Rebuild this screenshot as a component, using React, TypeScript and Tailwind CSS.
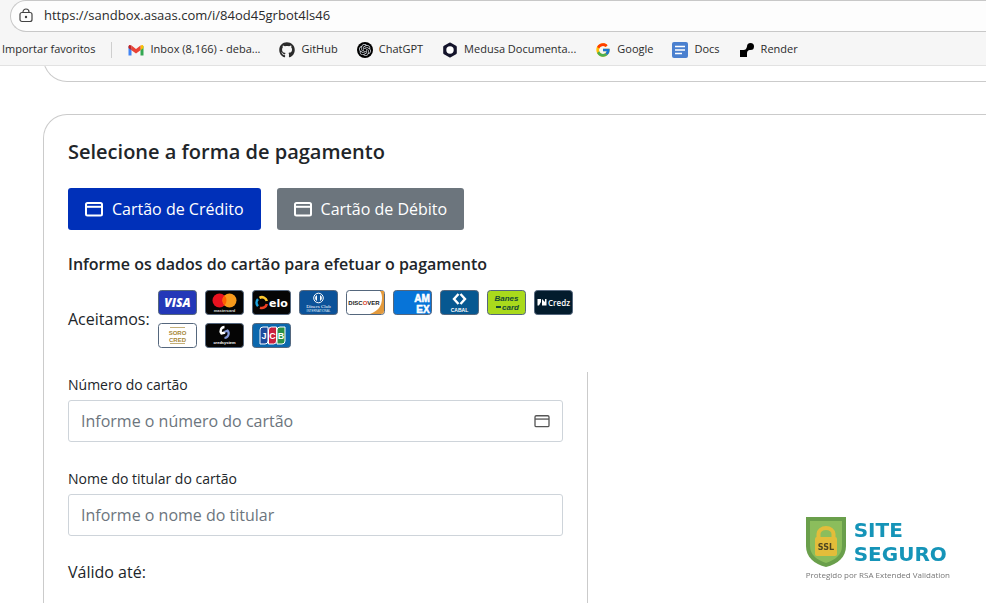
import type { ReactNode } from "react";
import { FaGithub } from "react-icons/fa";
import { FcGoogle } from "react-icons/fc";
import { SiOpenai } from "react-icons/si";

interface BookmarkProps {
  label: string;
  icon: ReactNode;
}

const GmailIcon = () => (
  <svg viewBox="0 0 16 12" className="h-3 w-4" aria-hidden="true">
    <path d="M.5 2v9.500h3V4.500z" fill="#4285f4" />
    <path d="M15.500 2v9.500h-3V4.500z" fill="#34a853" />
    <path d="M12.500 1.600c1.500-1.200 3-.6 3 1V4l-3 2.300z" fill="#fbbc04" />
    <path d="M3.500 1.600 8 5l4.500-3.400v4.700L8 9.500 3.500 6.300z" fill="#ea4335" />
    <path d="M.5 2.600c0-1.600 1.500-2.200 3-1v4.700L.5 4z" fill="#c5221f" />
  </svg>
);

const ChatGptIcon = () => (
  <span className="flex size-4 items-center justify-center rounded-full bg-black">
    <SiOpenai className="size-3 text-gray-300" />
  </span>
);

const MedusaIcon = () => (
  <svg viewBox="0 0 16 16" className="size-4" aria-hidden="true">
    <path d="M8 2 13.300 5v6L8 14l-5.300-3V5z" fill="#14142b" stroke="#14142b" strokeWidth="3" strokeLinejoin="round" />
    <circle cx="8" cy="8" r="3.700" fill="#fff" />
  </svg>
);

const DocsIcon = () => (
  <svg viewBox="0 0 16 16" className="size-4" aria-hidden="true">
    <rect width="16" height="16" rx="2" fill="#4a80cf" />
    <path d="M3 4.500h10M3 8h10M3 11.500h7" stroke="#fff" strokeWidth="1.500" />
  </svg>
);

const RenderIcon = () => (
  <svg viewBox="0 0 16 16" className="size-4" aria-hidden="true">
    <circle cx="11.500" cy="4.500" r="3.500" fill="#000" />
    <path d="M1 8h3.500c2 0 3-1 3.500-3.500l4 3.500c-2 0-4 .5-4 3V15H1z" fill="#000" />
  </svg>
);

const LockIcon = () => (
  <svg viewBox="0 0 16 16" className="size-4" fill="none" stroke="#444" strokeWidth="1.200" aria-hidden="true">
    <rect x="2" y="4.500" width="12" height="9" rx="2" />
    <path d="M5 4.500V4a3 3 0 0 1 6 0v.5" />
    <circle cx="8" cy="9" r=".6" fill="#444" />
  </svg>
);

const CreditCardIcon = ({ className }: { className: string }) => (
  <svg viewBox="0 0 18 16" className={className} fill="none" stroke="currentColor" aria-hidden="true">
    <rect x="1" y="2" width="16" height="12.500" rx="1.500" />
    <path d="M1 5.800h16" />
  </svg>
);

const Bookmark = ({ label, icon }: BookmarkProps) => (
  <a href="#" className="flex items-center gap-1.5 whitespace-nowrap">
    {icon}
    {label}
  </a>
);

interface CardBrandProps {
  name: string;
  fill: string;
  stroke?: string;
  children: ReactNode;
}

const CardBrand = ({ name, fill, stroke = "#55677d", children }: CardBrandProps) => (
  <svg
    viewBox="0 0 39 25"
    className="h-[25px] w-[39px] font-['Liberation_Sans',sans-serif]"
    role="img"
    aria-label={name}
  >
    <rect x=".5" y=".5" width="38" height="24" rx="3" fill={fill} stroke={stroke} />
    {children}
  </svg>
);

const CardBrands = () => (
  <div className="flex max-w-[420px] flex-wrap gap-2">
    <CardBrand name="Visa" fill="#2338b8">
      <text x="19.500" y="17" textAnchor="middle" fontSize="12" fontWeight="800" fontStyle="italic" className="font-['Open_Sans']" fill="#fff">VISA</text>
    </CardBrand>
    <CardBrand name="Mastercard" fill="#050505">
      <circle cx="14.500" cy="10.500" r="7" fill="#e8121f" />
      <circle cx="24.500" cy="10.500" r="7" fill="#f79a1c" />
      <path d="M19.500 5.600a7 7 0 0 1 0 9.800 7 7 0 0 1 0-9.800z" fill="#ff5f00" />
      <text x="19.500" y="22" textAnchor="middle" fontSize="4" fontWeight="700" fill="#ddd">mastercard</text>
    </CardBrand>
    <CardBrand name="Elo" fill="#050505">
      <g fill="none" strokeWidth="2.600">
        <path d="M7.500 7.800a5 5 0 0 1 7.300 3.200" stroke="#fdc82f" />
        <path d="M6 16.200a5 5 0 0 1 0-7" stroke="#1ba5e0" />
        <path d="M14.800 14a5 5 0 0 1-6.800 3.600" stroke="#ee4023" />
      </g>
      <text x="26.500" y="16.500" textAnchor="middle" fontSize="11" fontWeight="700" className="font-['DejaVu_Sans']" fill="#fff">elo</text>
    </CardBrand>
    <CardBrand name="Diners Club" fill="#0b5299">
      <circle cx="19.500" cy="8" r="4.800" fill="none" stroke="#fff" />
      <path d="M18 5a3.300 3.300 0 0 0 0 6zM21 5a3.300 3.300 0 0 1 0 6z" fill="#fff" />
      <text x="19.500" y="18" textAnchor="middle" fontSize="5" className="font-['Liberation_Serif']" fill="#fff">Diners Club</text>
      <text x="19.500" y="22" textAnchor="middle" fontSize="3" fill="#dceaf7">INTERNATIONAL</text>
    </CardBrand>
    <CardBrand name="Discover" fill="#fff">
      <path d="M38 1v20a3 3 0 0 1-3 3H24c8-3 12-8 12-16 0-3-.5-5-2-7z" fill="#e39a3c" />
      <text x="18" y="15" textAnchor="middle" fontSize="6" fontWeight="800" fill="#222">
        DISC<tspan fill="#d9432c">O</tspan>VER
      </text>
    </CardBrand>
    <CardBrand name="American Express" fill="#0774d8">
      <text x="29" y="11.500" textAnchor="middle" fontSize="10" fontWeight="800" fill="#fff" stroke="#fff" strokeWidth=".5">AM</text>
      <text x="30" y="22.500" textAnchor="middle" fontSize="10" fontWeight="800" fill="#fff" stroke="#fff" strokeWidth=".5">EX</text>
    </CardBrand>
    <CardBrand name="Cabal" fill="#075891">
      <path d="M18.500 4 14 9l4.500 5M20.500 4 25 9l-4.500 5" fill="none" stroke="#fff" strokeWidth="2.400" />
      <text x="19.500" y="22" textAnchor="middle" fontSize="5" fontWeight="700" fill="#fff">CABAL</text>
    </CardBrand>
    <CardBrand name="Banescard" fill="#a9da1c">
      <text x="19.500" y="11" textAnchor="middle" fontSize="8" fontWeight="800" fontStyle="italic" fill="#164b35">Banes</text>
      <path d="M9 16h5v2H9z" fill="#164b35" />
      <text x="23.500" y="20" textAnchor="middle" fontSize="8" fontWeight="800" fontStyle="italic" fill="#164b35">card</text>
    </CardBrand>
    <CardBrand name="Credz" fill="#031c2d">
      <path d="M3.500 9h3.500v3L5 15.500H3.500zM8 9l3 3V9h1.500v6.500H8z" fill="#fff" />
      <text x="25" y="15.500" textAnchor="middle" fontSize="8" fontWeight="600" className="font-['Open_Sans']" fill="#fff">Credz</text>
    </CardBrand>
    <CardBrand name="Sorocred" fill="#fff">
      <path d="M12 4.500h15M12 20.500h15" stroke="#b59a55" strokeWidth=".8" />
      <text x="19.500" y="11.500" textAnchor="middle" fontSize="6" fontWeight="700" fill="#a58535">SORO</text>
      <text x="19.500" y="18.500" textAnchor="middle" fontSize="6" fontWeight="700" fill="#a58535">CRED</text>
    </CardBrand>
    <CardBrand name="Credsystem" fill="#050505">
      <path d="M19.500 4a4 4 0 0 0-3 6.500l3.500-1" fill="none" stroke="#fff" strokeWidth="2.400" />
      <path d="M19.500 15a4.500 4.500 0 0 0 3-7.500l-3 1.500" fill="none" stroke="#8398d8" strokeWidth="2.200" />
      <text x="19.500" y="21" textAnchor="middle" fontSize="4" fontWeight="700" fill="#fff">credsystem</text>
    </CardBrand>
    <CardBrand name="JCB" fill="#0b67ad">
      <path d="M11 4h5v14a3 3 0 0 1-3 3H8V7a3 3 0 0 1 3-3z" fill="#1c4a9d" stroke="#fff" />
      <path d="M19.500 4h5v14a3 3 0 0 1-3 3h-5V7a3 3 0 0 1 3-3z" fill="#c9213f" stroke="#fff" />
      <path d="M28 4h5v14a3 3 0 0 1-3 3h-5V7a3 3 0 0 1 3-3z" fill="#2b9146" stroke="#fff" />
      <text x="12" y="15.500" textAnchor="middle" fontSize="9" fontWeight="800" fill="#fff">J</text>
      <text x="20.500" y="15.500" textAnchor="middle" fontSize="9" fontWeight="800" fill="#fff">C</text>
      <text x="29" y="15.500" textAnchor="middle" fontSize="9" fontWeight="800" fill="#fff">B</text>
    </CardBrand>
  </div>
);

const BrowserBar = () => (
  <header className="shrink-0 border-b border-[#e2e2e2] bg-[#f6f6f6] text-[#2b2b2b]">
    <div className="ml-2.5 flex h-8 items-center gap-2.5 rounded-l-full border border-r-0 border-[#c8c8c8] bg-[#fdfdfd] pl-[7px]">
      <LockIcon />
      <input
        type="text"
        aria-label="Endereço"
        defaultValue="https://sandbox.asaas.com/i/84od45grbot4ls46"
        className="min-w-0 flex-1 bg-transparent text-[13px] outline-none"
      />
    </div>
    <nav className="flex h-[33px] items-center gap-4 pl-0.5 pt-0.5 text-[11px]">
      <a href="#" className="whitespace-nowrap">Importar favoritos</a>
      <span className="h-4 w-px bg-[#cfcfcf]" />
      <div className="flex items-center gap-[19px]">
        <Bookmark label="Inbox (8,166) - deba..." icon={<GmailIcon />} />
        <Bookmark label="GitHub" icon={<FaGithub className="size-4" />} />
        <Bookmark label="ChatGPT" icon={<ChatGptIcon />} />
        <Bookmark label="Medusa Documenta..." icon={<MedusaIcon />} />
        <Bookmark label="Google" icon={<FcGoogle className="size-4" />} />
        <Bookmark label="Docs" icon={<DocsIcon />} />
        <Bookmark label="Render" icon={<RenderIcon />} />
      </div>
    </nav>
  </header>
);

const SecuritySeal = () => (
  <aside className="fixed bottom-5 right-9 flex flex-col">
    <div className="flex items-center gap-2">
      <svg viewBox="0 0 40 50" className="h-[50px] w-10" role="img" aria-label="SSL">
        <path d="M0 0h40v29c0 11-8 18-20 21C8 47 0 40 0 29z" fill="#6a9f4b" />
        <path d="M4 4h32v25c0 9-7 14-16 17C11 43 4 38 4 29z" fill="#8bbd5c" />
        <path d="M12.500 21v-4a7.500 6 0 0 1 15 0v4" fill="none" stroke="#e3bd3a" strokeWidth="4" />
        <rect x="9" y="20" width="22" height="19" rx="2" fill="#e3bd3a" />
        <text x="20" y="33" textAnchor="middle" fontSize="8" fontWeight="700" className="font-['DejaVu_Sans']" fill="#4d4520">SSL</text>
      </svg>
      <p className="font-['DejaVu_Sans',sans-serif] text-xl font-bold leading-6 text-[#1594b8]">
        SITE
        <br />
        SEGURO
      </p>
    </div>
    <p className="text-[8px] leading-4 text-[#777]">Protegido por RSA Extended Validation</p>
  </aside>
);

export default function App() {
  return (
    <div className="flex h-screen flex-col overflow-hidden bg-white font-['Open_Sans','Noto_Sans',sans-serif] text-[#212529]">
      <BrowserBar />

      <main className="flex flex-1 flex-col gap-8 overflow-hidden pl-[43px]">
        <section className="h-4 shrink-0 overflow-hidden">
          <div className="-mt-8 h-12 rounded-bl-3xl border-b border-l border-[#cbcbcb]" />
        </section>

        <section className="flex-1 rounded-tl-3xl border-l border-t border-[#cbcbcb] pl-6 pt-[25px]">
          <h1 className="text-xl font-semibold leading-6">Selecione a forma de pagamento</h1>

          <div className="mt-6 flex gap-4">
            <button type="button" className="flex h-[42px] items-center gap-[9px] rounded-[3px] bg-[#0030b9] px-[17px] text-white">
              <CreditCardIcon className="h-4 w-[18px] stroke-2" />
              Cartão de Crédito
            </button>
            <button type="button" className="flex h-[42px] items-center gap-[9px] rounded-[3px] bg-[#6c757d] px-[17px] text-white">
              <CreditCardIcon className="h-4 w-[18px] stroke-2" />
              Cartão de Débito
            </button>
          </div>

          <h2 className="mt-[22px] font-semibold leading-6">Informe os dados do cartão para efetuar o pagamento</h2>

          <div className="mt-3.5 flex items-center gap-2">
            <span>Aceitamos:</span>
            <CardBrands />
          </div>

          <form className="mt-6 h-full w-full max-w-[520px] border-r border-[#cbcbcb] pr-6">
            <label htmlFor="cardNumber" className="block pt-0.5 text-sm leading-[22px]">Número do cartão</label>
            <div className="relative mt-1">
              <input
                id="cardNumber"
                type="text"
                placeholder="Informe o número do cartão"
                className="h-[42px] w-full rounded-[3px] border border-[#ced4da] pl-3 pr-10 placeholder:text-[#6c757d]"
              />
              <CreditCardIcon className="absolute right-3 top-3.5 h-3.5 w-[18px] stroke-[1.5] text-[#555]" />
            </div>

            <label htmlFor="cardHolder" className="mt-6 block pt-0.5 text-sm leading-[22px]">Nome do titular do cartão</label>
            <input
              id="cardHolder"
              type="text"
              placeholder="Informe o nome do titular"
              className="mt-1 h-[42px] w-full rounded-[3px] border border-[#ced4da] px-3 placeholder:text-[#6c757d]"
            />

            <p className="mt-6">Válido até:</p>
          </form>
        </section>
      </main>

      <SecuritySeal />
    </div>
  );
}
